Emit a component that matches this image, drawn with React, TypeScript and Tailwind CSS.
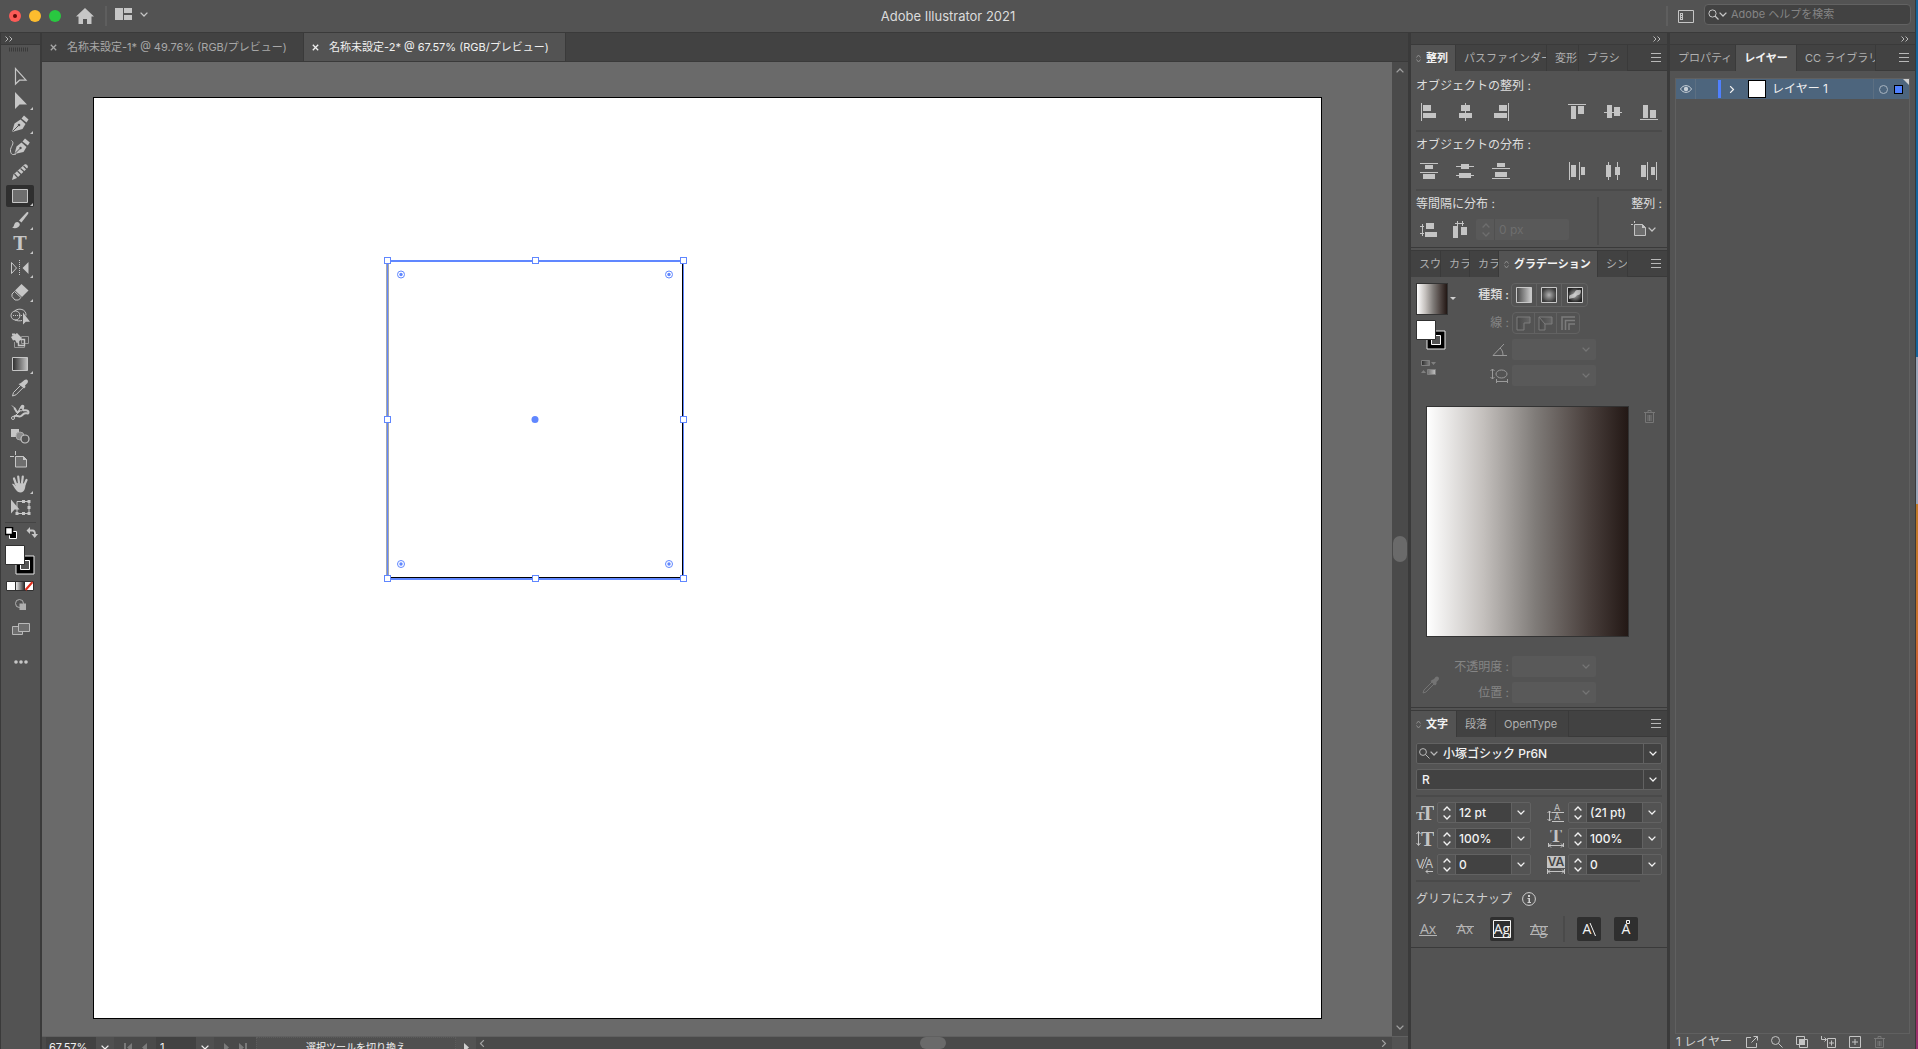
import React from "react";

type Children = { children?: React.ReactNode };

const Svg = ({
  w,
  h,
  className = "",
  children,
}: Children & { w: number; h: number; className?: string }) => (
  <svg
    width={w}
    height={h}
    viewBox={`0 0 ${w} ${h}`}
    className={`shrink-0 ${className}`}
    fill="currentColor"
    aria-hidden="true"
  >
    {children}
  </svg>
);

const Chevron = ({ className = "" }: { className?: string }) => (
  <Svg w={8} h={5} className={className}>
    <path d="M.6.6 4 4 7.4.6" fill="none" stroke="currentColor" strokeWidth="1.3" />
  </Svg>
);

const DoubleChevron = () => (
  <Svg w={8} h={6}>
    <path d="M.5.5 3 3 .5 5.5M4.5.5 7 3 4.5 5.5" fill="none" stroke="currentColor" />
  </Svg>
);

const Diamond = () => (
  <Svg w={5} h={9} className="text-[#8c8c8c]">
    <path d="M.5 3.500 2.500 1l2 2.500M.5 5.500l2 2.500 2-2.500" fill="none" stroke="currentColor" />
  </Svg>
);

/* ---------- Tool bar ---------- */

const tools: { name: string; more?: boolean; active?: boolean; art: React.ReactNode }[] = [
  {
    name: "選択ツール",
    art: <path d="M9.500 4.500v15.500l4-3.800h6.500z" fill="none" stroke="currentColor" strokeWidth="1.2" />,
  },
  { name: "ダイレクト選択ツール", more: true, art: <path d="M9 4v17l4.500-4.500H21z" /> },
  {
    name: "ペンツール",
    more: true,
    art: (
      <>
        <path d="m15.500 6.500 2.500-3 4.500 4-2 3z" />
        <path d="M6 20 8.500 11.500 14.500 7.500l5 4.500-3 5z" />
        <path d="m6.500 19.500 6-6" stroke="#535353" />
        <circle cx="13" cy="13" r="1.300" fill="#535353" />
      </>
    ),
  },
  {
    name: "曲線ツール",
    art: (
      <>
        <path d="m16.500 5.500 2.500-3 4.800 4-2 3z" />
        <path d="M8.500 18 10.500 10.500 15.500 6.500l5 4.500-3 5z" />
        <path d="m9 17.500 5-5" stroke="#535353" />
        <circle cx="14.500" cy="12" r="1.200" fill="#535353" />
        <path d="M5.500 4.500c4 3-1.500 6-1 10.500.5 4 2.500 4 5.500 3" fill="none" stroke="currentColor" />
      </>
    ),
  },
  {
    name: "ブラシツール",
    art: (
      <>
        <path d="m6 20 1.500-5.500L18.500 4.500c1.500-1 4.500 1.500 3 3.500L11 18z" />
        <path
          d="m8.500 14 3.500 4M11.500 11l4 4M14.500 8.500l4 3.500M17.500 6l3.500 3.500"
          stroke="#535353"
          strokeWidth="1.200"
        />
      </>
    ),
  },
  {
    name: "長方形ツール",
    more: true,
    active: true,
    art: <path d="M6.500 5.500h15v13h-15z" fill="#6e6e6e" stroke="currentColor" />,
  },
  {
    name: "筆ツール",
    more: true,
    art: (
      <>
        <path d="M13 12.500 20.500 4.500c1.500-1 2.500 0 1.500 1.500L15.500 14.500z" />
        <path d="M6 19.500c2.500-.5 1.500-3 3.500-5 2-1.500 4.800.500 4.300 2.500-.8 3-5 4-7.800 2.500z" />
      </>
    ),
  },
  {
    name: "文字ツール",
    more: true,
    art: (
      <text x="14" y="18" textAnchor="middle" fontSize="18" fontWeight="700" fontFamily="'DejaVu Serif', serif">
        T
      </text>
    ),
  },
  {
    name: "リフレクトツール",
    more: true,
    art: (
      <>
        <path d="M5.500 6.500v11L10.500 12z" fill="none" stroke="currentColor" />
        <path d="M22.500 6v12L16.500 12z" />
        <path d="M13.500 4v16" stroke="currentColor" strokeDasharray="1 1" />
      </>
    ),
  },
  {
    name: "消しゴムツール",
    more: true,
    art: (
      <>
        <path d="m15.500 4 7 6.500-6.500 6.500-7-6.500z" />
        <path d="m8.500 11.500 6.500 6-2.500 2.500H9l-3-3.500v-2.500z" fill="none" stroke="currentColor" />
      </>
    ),
  },
  {
    name: "シェイプ形成ツール",
    art: (
      <>
        <circle cx="9.500" cy="11.500" r="4.500" fill="none" stroke="currentColor" />
        <path d="M8.500 7c4-3.500 12-2 11.500 4.500M9 16c2 1 5 1 7 .5" fill="none" stroke="currentColor" />
        <path d="M7 11.500h10" stroke="currentColor" strokeDasharray="1 1" />
        <path d="M17 8.500v12l2.800-2.800H24z" />
      </>
    ),
  },
  {
    name: "ライブペイントツール",
    art: (
      <>
        <path d="m5 9 6-4 5 5-5 5.500-2-3.500-2 .5z" />
        <path d="M6 5.500h3v2H6z" />
        <path d="M15.500 8.500h7v7h-7zM8.500 14v5.500h10v-7" fill="none" stroke="#999" />
        <path d="M12.500 11.500h6v6h-6z" fill="none" stroke="currentColor" strokeWidth="1.400" />
      </>
    ),
  },
  {
    name: "グラデーションツール",
    more: true,
    art: <path d="M6.500 5.500h15v13h-15z" fill="url(#toolGrad)" stroke="currentColor" />,
  },
  {
    name: "スポイトツール",
    art: (
      <>
        <path d="m14 7.500 1.500-1 3-2.500c2-1.500 4.500.5 3 3L19 9.500l.5 1.500-1.500 1.500L12.500 8z" />
        <path d="m14.500 9.500-7 7-1 3.500 3.500-1.200 7-7" fill="none" stroke="currentColor" />
      </>
    ),
  },
  {
    name: "パペットワープツール",
    art: (
      <>
        <path
          d="M8 8c2 1 2 5 4 4s2-4 4-6c3-1 0 3 1 4s5-1 5.500 2-3 0-5 2-3 3-6 2-4 1-4 2"
          fill="none"
          stroke="currentColor"
          strokeWidth="2"
        />
        <path d="M6 5.500 8.500 8M7 18l8-8" stroke="currentColor" />
        <circle cx="7" cy="18" r="1.500" fill="#535353" stroke="currentColor" />
        <circle cx="15" cy="9.500" r="1.500" fill="#535353" stroke="currentColor" />
      </>
    ),
  },
  {
    name: "ブレンドツール",
    art: (
      <>
        <path d="M5 5h8v8H5z" />
        <circle cx="14" cy="12" r="4" fill="#8a8a8a" stroke="#aaa" />
        <circle cx="19" cy="15" r="4" fill="#535353" stroke="currentColor" strokeWidth="1.200" />
      </>
    ),
  },
  {
    name: "アートボードツール",
    art: (
      <>
        <path d="M9.500 8.500h8l3 3v7.500h-11z" fill="#6e6e6e" stroke="currentColor" />
        <path d="M4 8.500h4M9.500 3v4" stroke="currentColor" />
        <path d="M17 8v4h4z" />
      </>
    ),
  },
  {
    name: "手のひらツール",
    more: true,
    art: (
      <>
        <path
          d="m10 12-2-5.500M13 11l-.8-6.500M16 11l.8-6.500M18.500 12.500l2-4.500"
          stroke="currentColor"
          strokeWidth="2.200"
          strokeLinecap="round"
        />
        <path d="M6 12c1.500-.800 3 1 4 2l-1-3 10.500.5c0 3-.5 9-5 9-4 0-6-5-8.500-8.500z" />
      </>
    ),
  },
  {
    name: "変形ツール",
    art: (
      <>
        <path d="M5 3.500v14l3.500-4h5z" />
        <path d="M11 5.500h12v12H11z" fill="none" stroke="currentColor" />
        <path d="M16 4h3v3h-3zM16 16h3v3h-3zM21.500 4h3v3h-3zM21.500 10h3v3h-3zM21.500 16h3v3h-3zM9.500 16h3v3h-3z" />
      </>
    ),
  },
];

const FillStroke = ({ className = "" }: { className?: string }) => (
  <Svg w={30} h={30} className={className}>
    <path d="M11 11h18v18H11z" fill="#000" stroke="#e6e6e6" />
    <path d="M15.500 15.500h9v9h-9z" fill="#535353" stroke="#fff" />
    <path d="M.5.500h19v19H.5z" fill="#fff" stroke="#303030" />
  </Svg>
);

const ToolBar = () => (
  <aside className="flex w-[42px] shrink-0 flex-col border-x border-r-2 border-[#3a3a3a] bg-[#535353]">
    <div className="flex h-3 shrink-0 items-center border-b border-[#3a3a3a] bg-[#444] pl-1 text-[#b8b8b8]">
      <DoubleChevron />
    </div>
    <Svg w={20} h={5} className="mt-0.5 ml-2">
      <path d="M0 2.500h20" stroke="#3a3a3a" strokeWidth="4" strokeDasharray="1 1" />
    </Svg>
    <div className="mt-3 flex flex-col pl-[5px] text-[#c6c6c6]">
      {tools.map((t) => (
        <button key={t.name} type="button" aria-label={t.name} className="relative flex h-6 w-7 items-center">
          {t.active && <span className="absolute inset-x-0 inset-y-px rounded-xs bg-[#2f2f2f]" />}
          <Svg w={28} h={24} className="relative">
            {t.art}
            {t.more && <path d="M27 19v3h-3z" />}
          </Svg>
        </button>
      ))}
    </div>
    <div className="mx-1 mt-0.5 h-px bg-[#444]" />
    <div className="mt-1 flex items-center justify-between pr-0.5 pl-1 text-[#c6c6c6]">
      <button type="button" aria-label="初期設定の塗りと線">
        <Svg w={12} h={12}>
          <path d="M4.500 4.500h7v7h-7z" fill="#000" stroke="#fff" />
          <path d="M.5.500h7v7h-7z" fill="#fff" stroke="#000" strokeWidth="1.500" />
        </Svg>
      </button>
      <button type="button" aria-label="塗りと線を入れ替え">
        <Svg w={12} h={12}>
          <path d="M3 3.500h3.500c2 0 2.500 1 2.500 4" fill="none" stroke="currentColor" strokeWidth="1.800" />
          <path d="M4 0v7L.5 3.500zM5.500 7H12l-3.300 4z" />
        </Svg>
      </button>
    </div>
    <button type="button" aria-label="塗りと線" className="mt-1.5 ml-1">
      <FillStroke />
    </button>
    <Svg w={28} h={10} className="mt-[6px] ml-[5px]">
      <path d="M.5.500h27v9H.5z" fill="#fff" stroke="#303030" />
      <path d="M9 1h10v8H9z" fill="url(#modeGrad)" />
      <path d="M9.500 1v8M18.500 1v8" stroke="#303030" />
      <path d="m19.500 9 7-8" stroke="#e0301e" strokeWidth="2" />
    </Svg>
    <button type="button" aria-label="描画方法" className="mt-2 self-center text-[#b0b0b0]">
      <Svg w={11} h={11}>
        <circle cx="4.500" cy="4.500" r="4" fill="none" stroke="currentColor" />
        <path d="M4.500 4.500H11V11H4.500z" />
      </Svg>
    </button>
    <button type="button" aria-label="スクリーンモード" className="mt-3 self-center text-[#b8b8b8]">
      <Svg w={18} h={14}>
        <path d="M.5 4.500h10v8H.5z" fill="#6e6e6e" stroke="currentColor" />
        <path d="M6.500 1.500h11v8h-11z" fill="#6e6e6e" stroke="currentColor" />
      </Svg>
    </button>
    <button type="button" aria-label="ツールバーを編集" className="mt-6 self-center text-[#c6c6c6]">
      <Svg w={14} h={4}>
        <circle cx="2" cy="2" r="1.800" />
        <circle cx="7" cy="2" r="1.800" />
        <circle cx="12" cy="2" r="1.800" />
      </Svg>
    </button>
  </aside>
);

/* ---------- Document ---------- */

const handles = [
  [4, 4], [152, 4], [300, 4],
  [4, 163], [300, 163],
  [4, 322], [152, 322], [300, 322],
];

const corners = [
  [18, 18.5], [286, 18.5], [18, 308], [286, 308],
];

const SelectedShape = () => (
  <svg width="304" height="327" viewBox="0 0 304 327" className="absolute top-[158px] left-[289px]" aria-hidden="true">
    <path d="M4.500 4v318" stroke="#a8a8a8" strokeWidth="3" />
    <path d="M299.500 4v318M4 321.500h296" stroke="#000" />
    <path d="M4.500 4v318M300.500 4v318" stroke="#6087ff" />
    <path d="M4 5h297M4 323h297" stroke="#6087ff" strokeWidth="2" />
    {handles.map(([x, y]) => (
      <rect key={`${x}-${y}`} x={x - 2.5} y={y - 2.5} width="6" height="6" fill="#fff" stroke="#6087ff" />
    ))}
    {corners.map(([x, y]) => (
      <g key={`${x}-${y}`}>
        <circle cx={x} cy={y} r="3.500" fill="#fff" stroke="#6087ff" />
        <circle cx={x} cy={y} r="1.700" fill="#6087ff" />
      </g>
    ))}
    <circle cx="152" cy="163.500" r="3.500" fill="#6087ff" />
  </svg>
);

const DocTab = ({ label, active }: { label: string; active?: boolean }) => (
  <div
    className={`flex w-[262px] items-center gap-2.5 border-r border-[#3a3a3a] pl-2 ${
      active ? "bg-[#535353] text-[#f0f0f0]" : "text-[#a8a8a8]"
    }`}
  >
    <button type="button" aria-label="閉じる">
      <Svg w={7} h={7}>
        <path d="m.8.800 5.400 5.400M6.200.8.800 6.200" stroke="currentColor" strokeWidth="1.300" />
      </Svg>
    </button>
    <button type="button" className="text-[11px] leading-4 whitespace-nowrap">
      {label}
    </button>
  </div>
);

const StatusBar = () => (
  <footer className="h-[13px] shrink-0 overflow-hidden border-t border-[#606060] bg-[#4a4a4a]">
    <div className="flex h-5 items-center text-[11px] leading-4 text-[#f0f0f0]">
      <div className="ml-1 flex h-5 w-[68px] items-center bg-[#424242]">
        <input aria-label="ズーム" defaultValue="67.57%" className="w-[50px] pl-[3px]" />
        <button type="button" aria-label="ズーム値" className="flex h-5 w-[18px] items-center justify-center bg-[#505050]">
          <Chevron />
        </button>
      </div>
      <div className="flex w-[42px] items-center justify-center gap-2.5 text-[#7a7a7a]">
        <Svg w={8} h={9}>
          <path d="M0 0h2v9H0zM8 0v9L3 4.500z" />
        </Svg>
        <Svg w={5} h={9}>
          <path d="M5 0v9L0 4.500z" />
        </Svg>
      </div>
      <div className="flex h-5 w-[58px] items-center bg-[#424242]">
        <input aria-label="アートボード" defaultValue="1" className="w-10 pl-1" />
        <button type="button" aria-label="アートボード一覧" className="flex h-5 w-[18px] items-center justify-center bg-[#505050]">
          <Chevron />
        </button>
      </div>
      <div className="flex w-[42px] items-center justify-center gap-2.5 text-[#7a7a7a]">
        <Svg w={5} h={9}>
          <path d="M0 0v9L5 4.500z" />
        </Svg>
        <Svg w={8} h={9}>
          <path d="M6 0h2v9H6zM0 0v9L5 4.500z" />
        </Svg>
      </div>
      <div className="flex h-5 w-[200px] items-center justify-center border border-dotted border-[#5c5c5c] bg-[#505050] text-[10px]">
        選択ツールを切り換え
      </div>
      <div className="flex h-5 w-5 items-center justify-center bg-[#535353] text-[#d0d0d0]">
        <Svg w={5} h={9}>
          <path d="M0 0v9L5 4.500z" />
        </Svg>
      </div>
      <div className="flex h-5 flex-1 items-start justify-between bg-[#4a4a4a] pr-1 pl-0.5 text-[#a0a0a0]">
        <Chevron className="mt-1 rotate-90" />
        <span className="h-3 w-[26px] rounded-full bg-[#6a6a6a]" />
        <Chevron className="mt-1 -rotate-90" />
      </div>
      <div className="h-5 w-4 bg-[#535353]" />
    </div>
  </footer>
);

const Document = () => (
  <main className="flex min-w-0 flex-1 flex-col">
    <div className="flex h-[29px] shrink-0 border-b border-[#3a3a3a] bg-[#424242]">
      <DocTab label="名称未設定-1* @ 49.76% (RGB/プレビュー)" />
      <DocTab label="名称未設定-2* @ 67.57% (RGB/プレビュー)" active />
    </div>
    <div className="flex min-h-0 flex-1">
      <div className="flex min-w-0 flex-1 bg-[#6a6a6a] pt-[35px] pr-[70px] pb-[17px] pl-[51px]">
        <div className="relative flex-1 border border-black bg-white">
          <SelectedShape />
        </div>
      </div>
      <div className="flex w-4 shrink-0 flex-col items-center justify-between bg-[#4a4a4a] py-1.5 text-[#a0a0a0]">
        <Chevron className="rotate-180" />
        <span className="h-[26px] w-3.5 rounded-full bg-[#6a6a6a]" />
        <Chevron />
      </div>
    </div>
    <StatusBar />
  </main>
);

/* ---------- Panels ---------- */

const Tab = ({ active, className = "", children }: Children & { active?: boolean; className?: string }) => (
  <button
    type="button"
    role="tab"
    aria-selected={!!active}
    className={`flex h-full shrink-0 items-center overflow-hidden border-r border-[#3a3a3a] text-[11px] leading-4 whitespace-nowrap ${
      active ? "gap-[5px] bg-[#535353] pl-[5px] font-bold text-[#f2f2f2]" : "pl-2 text-[#b0b0b0]"
    } ${className}`}
  >
    {active && <Diamond />}
    {children}
  </button>
);

const TabRow = ({ children }: Children) => (
  <div role="tablist" className="flex h-[26px] shrink-0 bg-[#424242]">
    {children}
    <button
      type="button"
      aria-label="パネルメニュー"
      className="flex flex-1 items-center justify-end border-b border-[#3a3a3a] pr-1.5 text-[#b8b8b8]"
    >
      <Svg w={10} h={9}>
        <path d="M0 .5h10M0 4.500h10M0 8.500h10" stroke="currentColor" />
      </Svg>
    </button>
  </div>
);

const alignObjects = [
  <path d="M1 0h1v18H1zM3 2h8v6H3zM3 10h13v5H3z" />,
  <path d="M9 0h1v18H9zM5 2h9v6H5zM3 10h13v5H3z" />,
  <path d="M16 0h1v18h-1zM7 2h8v6H7zM2 10h13v5H2z" />,
  <path d="M0 1h18v1H0zM3 3h5v13H3zM10 3h6v8h-6z" />,
  <path d="M0 9h18v1H0zM3 2h5v13H3zM10 4h6v9h-6z" />,
  <path d="M0 16h18v1H0zM3 2h5v13H3zM10 7h6v8h-6z" />,
];

const distributeObjects = [
  <path d="M0 1h18v1H0zM5 3h8v4H5zM0 10h18v1H0zM3 12h12v5H3z" />,
  <path d="M0 4h18v1H0zM5 2h8v5H5zM0 13h18v1H0zM3 11h12v5H3z" />,
  <path d="M0 6h18v1H0zM5 1h8v4H5zM0 16h18v1H0zM3 10h12v5H3z" />,
  <path d="M1 0h1v18H1zM3 3h5v12H3zM11 0h1v18h-1zM13 5h4v8h-4z" />,
  <path d="M4 0h1v18H4zM2 3h5v12H2zM13 0h1v18h-1zM11 5h5v8h-5z" />,
  <path d="M7 0h1v18H7zM1 3h5v12H1zM16 0h1v18h-1zM11 5h4v8h-4z" />,
];

const IconRow = ({ icons, label }: { icons: React.ReactNode[]; label: string }) => (
  <div className="mt-2 flex justify-between px-1 text-[#c4c4c4]">
    {[icons.slice(0, 3), icons.slice(3)].map((group, g) => (
      <div key={g} className="flex gap-[18px]">
        {group.map((icon, i) => (
          <button key={i} type="button" aria-label={`${label} ${g * 3 + i + 1}`}>
            <Svg w={18} h={18}>{icon}</Svg>
          </button>
        ))}
      </div>
    ))}
  </div>
);

const Spinner = () => (
  <Svg w={8} h={14}>
    <path d="M.6 4.500 4 1l3.400 3.500M.6 9.500 4 13l3.400-3.500" fill="none" stroke="currentColor" strokeWidth="1.300" />
  </Svg>
);

const AlignPanel = () => (
  <section className="flex flex-col border-b border-[#3a3a3a]">
    <TabRow>
      <Tab active className="w-[45px]">整列</Tab>
      <Tab className="w-[91px]">パスファインダー</Tab>
      <Tab className="w-8">変形</Tab>
      <Tab className="w-[49px]">ブラシ</Tab>
    </TabRow>
    <div className="px-[5px] pt-1.5 pb-0.5 text-[12px] leading-[18px] text-[#dedede]">
      <h3>オブジェクトの整列 :</h3>
      <IconRow icons={alignObjects} label="整列" />
      <div className="mt-[9px] h-0.5 bg-[#4a4a4a]" />
      <h3 className="mt-1">オブジェクトの分布 :</h3>
      <IconRow icons={distributeObjects} label="分布" />
      <div className="mt-[9px] h-0.5 bg-[#4a4a4a]" />
      <div className="mt-1 flex">
        <div className="flex-1">
          <h3>等間隔に分布 :</h3>
          <div className="mt-1.5 flex items-center gap-3.5 pl-1 text-[#c4c4c4]">
            <button type="button" aria-label="垂直方向等間隔に分布">
              <Svg w={18} h={18}>
                <path d="M6 2h8v6H6zM5 11h12v5H5zM0 5h4v1H0zM0 12h4v1H0zM2 3h1v12H2z" />
              </Svg>
            </button>
            <button type="button" aria-label="水平方向等間隔に分布">
              <Svg w={18} h={18}>
                <path d="M1 5h5v12H1zM9 6h6v8H9zM3 2h9v1H3zM5 0h1v5H5zM10 0h1v5h-1z" />
              </Svg>
            </button>
            <div className="-ml-2 flex h-[21px] w-[93px] items-center rounded-xs bg-[#595959] pl-1.5 text-[#6e6e6e]">
              <Spinner />
              <input
                aria-label="間隔値"
                defaultValue="0 px"
                disabled
                className="ml-1 h-full w-16 border-l border-[#505050] pl-1 text-[12px]"
              />
            </div>
          </div>
        </div>
        <div className="mt-0.5 h-12 w-0.5 bg-[#4a4a4a]" />
        <div className="w-[63px]">
          <h3 className="text-right">整列 :</h3>
          <button type="button" aria-label="整列の基準" className="mt-1.5 flex items-center pt-0.5 pl-8 text-[#c4c4c4]">
            <Svg w={16} h={16}>
              <path d="M3.500 3.500h8l3 3v8h-11z" fill="#6e6e6e" stroke="currentColor" />
              <path d="M0 3h2v1H0zM3 0h1v2H3zM11 3v4h4z" />
            </Svg>
            <Chevron className="ml-px" />
          </button>
        </div>
      </div>
    </div>
  </section>
);

const DisabledSelect = ({ label }: { label: string }) => (
  <div className="relative h-[21px] w-[84px] rounded-xs bg-[#595959] text-[#757575]">
    <select aria-label={label} disabled className="size-full appearance-none">
      <option></option>
    </select>
    <Chevron className="absolute top-2 right-1.5" />
  </div>
);

const GradientPanel = () => (
  <section className="mt-0.5 flex flex-col border-y border-[#3a3a3a]">
    <TabRow>
      <Tab className="w-[30px]">スウ</Tab>
      <Tab className="w-[29px]">カラ</Tab>
      <Tab className="w-[29px]">カラ</Tab>
      <Tab active className="w-[99px]">グラデーション</Tab>
      <Tab className="w-[30px]">シン</Tab>
    </TabRow>
    <div className="flex px-[5px] pt-1.5">
      <div className="w-10">
        <div className="flex items-center gap-0.5">
          <div className="size-8 shrink-0 border border-[#333] bg-[linear-gradient(to_right,#fff,#c4c0bd_28%,#7f7b78_54%,#4a403d_80%,#231815)]" />
          <Svg w={6} h={4} className="text-[#d0d0d0]">
            <path d="M0 0h6L3 3z" />
          </Svg>
        </div>
        <FillStroke className="mt-[5px]" />
        <Svg w={16} h={15} className="mt-2.5 ml-[5px] text-[#808080]">
          <path d="M.5.500h8v5h-8zM6.500 9.500h8v5h-8z" fill="url(#toolGrad)" stroke="currentColor" />
          <path d="M10 2h5l-2.500 3zM0 13h5L2.500 10z" />
        </Svg>
      </div>
      <div className="flex flex-1 flex-col gap-[5px] text-[12px] leading-[18px] text-[#858585]">
        <div className="flex h-6 items-center">
          <span className="w-[53px] text-right font-medium text-[#dedede]">種類 :</span>
          <div className="ml-0.5 flex h-6 divide-x divide-[#626262] rounded-sm border border-[#626262]">
            {[
              { name: "線形グラデーション", fill: "url(#lin)" },
              { name: "円形グラデーション", fill: "url(#rad)" },
              { name: "フリーグラデーション", fill: "url(#free)" },
            ].map(({ name, fill }) => (
              <button key={name} type="button" aria-label={name} className="flex w-[25px] items-center justify-center">
                <Svg w={16} h={16}>
                  <path d="M.5.500h15v15H.5z" fill={fill} stroke="#c8c8c8" />
                  {fill === "url(#free)" && (
                    <path
                      d="M2 11c0-4 2-3 4-4s2-4 4-4 4-1 4 1-1 4-3 4-2 3-5 3-4 2-4 0z"
                      fill="#e0e0e0"
                      opacity=".7"
                    />
                  )}
                </Svg>
              </button>
            ))}
          </div>
        </div>
        <div className="flex h-[22px] items-center">
          <span className="w-[53px] text-right">線 :</span>
          <div className="ml-[3px] flex h-[22px] divide-x divide-[#626262] rounded-sm border border-[#626262]">
            {[
              <path d="M1 14V1h13v6H8v7z" fill="url(#dim)" stroke="#7c7c7c" />,
              <path d="M1 1v13h6V8h7V1zM1 1l6 7" fill="url(#dim)" stroke="#7c7c7c" />,
              <path d="M1 14V1h13M4.500 14V4.500H14M8 14V8h6" fill="none" stroke="#7c7c7c" strokeWidth="1.500" />,
            ].map((art, i) => (
              <button key={i} type="button" disabled aria-label={`線 ${i + 1}`} className="flex w-[22px] items-center justify-center">
                <Svg w={15} h={15}>{art}</Svg>
              </button>
            ))}
          </div>
        </div>
        <div className="flex items-center justify-start">
          <span className="flex w-[53px] justify-end pr-0.5 text-[#9a9a9a]">
            <Svg w={15} h={13}>
              <path d="M12 1 1 12.500h14M8 5c2 1.500 3 4 3 7.500" fill="none" stroke="currentColor" />
            </Svg>
          </span>
          <span className="ml-[3px]">
            <DisabledSelect label="角度" />
          </span>
        </div>
        <div className="flex items-center justify-start">
          <span className="flex w-[53px] justify-end pr-px text-[#9a9a9a]">
            <Svg w={18} h={15}>
              <path
                d="M2.500 1v10M.5 3l2-2 2 2M.5 9l2 2 2-2M6.500 11v4M17.500 11v4M6.500 13.500h11"
                fill="none"
                stroke="currentColor"
              />
              <ellipse cx="11.500" cy="6" rx="5.500" ry="4" fill="none" stroke="currentColor" />
            </Svg>
          </span>
          <span className="ml-[3px]">
            <DisabledSelect label="縦横比" />
          </span>
        </div>
      </div>
    </div>
    <div className="mt-5 flex pr-3 pl-[15px]">
      <div className="h-[231px] flex-1 border border-[#333] bg-[linear-gradient(to_right,#fff,#c4c0bd_28%,#7f7b78_54%,#4a403d_80%,#231815)]" />
      <button type="button" disabled aria-label="分岐点を削除" className="ml-[15px] self-start pt-1 text-[#777]">
        <Svg w={11} h={13}>
          <path d="M0 2.500h11M4 2V.5h3V2M1.500 3v9.500h8V3M4 5v6M5.500 5v6M7 5v6" fill="none" stroke="currentColor" />
        </Svg>
      </button>
    </div>
    <div className="mt-[19px] flex px-[5px] pb-1 text-[12px] leading-[18px] text-[#858585]">
      <button type="button" disabled aria-label="スポイト" className="w-9 pt-2.5 pl-1.5 text-[#747474]">
        <Svg w={18} h={18}>
          <path d="m10 4 2-1 1.500-2c2-1.500 4.500.5 3 3L14.500 6v2L13 9.500 8.500 5z" />
          <path d="m10 6-8 8-1 3 3-1 8-8" fill="none" stroke="currentColor" />
        </Svg>
      </button>
      <div className="flex flex-1 flex-col gap-[5px]">
        {["不透明度", "位置"].map((name) => (
          <div key={name} className="flex items-center">
            <span className="w-[57px] text-right whitespace-nowrap">{name} :</span>
            <span className="ml-[3px]">
              <DisabledSelect label={name} />
            </span>
          </div>
        ))}
      </div>
    </div>
  </section>
);

const FontSelect = ({ label, value, search }: { label: string; value: string; search?: boolean }) => (
  <div className="relative flex h-[21px] items-center rounded-xs border border-[#626262] bg-[#424242] text-[#f2f2f2]">
    {search && (
      <span className="flex items-center pl-0.5 text-[#b8b8b8]">
        <Svg w={11} h={11}>
          <circle cx="4" cy="4" r="3.400" fill="none" stroke="currentColor" />
          <path d="m6.500 6.500 4 4" stroke="currentColor" />
        </Svg>
        <Chevron />
      </span>
    )}
    <select aria-label={label} className="h-full flex-1 appearance-none pl-[5px] text-[12px] font-medium">
      <option>{value}</option>
    </select>
    <span className="pointer-events-none absolute inset-y-0 right-0 flex w-[18px] items-center justify-center border-l border-[#626262]">
      <Chevron />
    </span>
  </div>
);

const ValueField = ({ label, value, icon }: { label: string; value: string; icon: React.ReactNode }) => (
  <div className="flex items-center gap-[3px]">
    <span className="text-[#c4c4c4]">
      <Svg w={18} h={18}>{icon}</Svg>
    </span>
    <div className="flex h-[21px] w-[94px] divide-x divide-[#626262] rounded-xs border border-[#626262] text-[#f2f2f2]">
      <span className="flex w-[18px] items-center justify-center">
        <Spinner />
      </span>
      <input
        aria-label={label}
        defaultValue={value}
        className="min-w-0 flex-1 bg-[#424242] pl-[3px] text-[12px] font-medium"
      />
      <button type="button" aria-label={`${label}の一覧`} className="flex w-[18px] items-center justify-center">
        <Chevron />
      </button>
    </div>
  </div>
);

const serif = "'Liberation Serif', serif";
const sans = "Inter, sans-serif";

const SnapButton = ({
  label,
  name,
  on,
  boxed,
  x = 9,
  line,
}: {
  label: string;
  name: string;
  on?: boolean;
  boxed?: boolean;
  x?: number;
  line?: React.ReactNode;
}) => (
  <button
    type="button"
    aria-label={name}
    className={`flex size-6 items-center justify-center rounded-xs ${on ? "bg-[#2f2f2f] text-[#f4f4f4]" : "text-[#b4b4b4]"}`}
  >
    <Svg w={18} h={18}>
      <text x={x} y="14" textAnchor="middle" fontSize="14" fontFamily="'Open Sans', sans-serif">
        {label}
      </text>
      {boxed && <path d="M.5.500h17v17H.5z" fill="none" stroke="currentColor" />}
      {line}
    </Svg>
  </button>
);

const CharacterPanel = () => (
  <section className="mt-0.5 flex flex-col border-y border-[#3a3a3a]">
    <TabRow>
      <Tab active className="w-[46px]">文字</Tab>
      <Tab className="w-[39px]">段落</Tab>
      <Tab className="w-[73px]">OpenType</Tab>
    </TabRow>
    <div className="px-[5px] pt-1.5 pb-[5px]">
      <div className="flex flex-col gap-[5px]">
        <FontSelect label="フォントファミリ" value="小塚ゴシック Pr6N" search />
        <FontSelect label="フォントスタイル" value="R" />
      </div>
      <div className="mt-[5px] h-0.5 bg-[#4a4a4a]" />
      <div className="mt-[5px] flex justify-between">
        <div className="flex flex-col gap-[5px]">
          <ValueField
            label="フォントサイズ"
            value="12 pt"
            icon={
              <g fontFamily={serif} fontWeight="700">
                <text x="0" y="16" fontSize="13">T</text>
                <text x="5" y="16" fontSize="20">T</text>
              </g>
            }
          />
          <ValueField
            label="垂直比率"
            value="100%"
            icon={
              <>
                <path d="M2.500 2v13M.5 4l2-2.500 2 2.500M.5 13l2 2.500 2-2.500" fill="none" stroke="currentColor" />
                <text x="5" y="16" fontSize="20" fontWeight="700" fontFamily={serif}>T</text>
              </>
            }
          />
          <ValueField
            label="カーニング"
            value="0"
            icon={
              <>
                <text x="0" y="12" fontSize="12" fontFamily={sans}>V</text>
                <text x="9" y="12" fontSize="12" fontFamily={sans}>A</text>
                <path d="m6 13 5-12M17 15.500h-7M12 13.500l-2 2 2 2" fill="none" stroke="currentColor" />
              </>
            }
          />
        </div>
        <div className="flex flex-col gap-[5px]">
          <ValueField
            label="行送り"
            value="(21 pt)"
            icon={
              <>
                <path
                  d="M2.500 7v10M.5 9l2-2 2 2M.5 15l2 2 2-2M5 8.500h12M5 17.500h12"
                  fill="none"
                  stroke="currentColor"
                />
                <text x="7" y="7" fontSize="9" fontFamily={sans}>A</text>
                <text x="7" y="16" fontSize="9" fontFamily={sans}>A</text>
              </>
            }
          />
          <ValueField
            label="水平比率"
            value="100%"
            icon={
              <>
                <text x="9" y="12" textAnchor="middle" fontSize="18" fontWeight="700" fontFamily={serif}>T</text>
                <path
                  d="M1.500 13v4M16.500 13v4M2 15.500h14M4 13.500l-2 2 2 2M14 13.500l2 2-2 2"
                  fill="none"
                  stroke="currentColor"
                />
              </>
            }
          />
          <ValueField
            label="トラッキング"
            value="0"
            icon={
              <>
                <path d="M0 0h18v12H0z" />
                <text x="9" y="10" textAnchor="middle" fontSize="12" fontWeight="600" fontFamily={sans} fill="#424242">VA</text>
                <path
                  d="M.5 13v5M17.500 13v5M1 15.500h16M3 13.500l-2 2 2 2M15 13.500l2 2-2 2"
                  fill="none"
                  stroke="currentColor"
                />
              </>
            }
          />
        </div>
      </div>
      <div className="mt-[5px] mr-[22px] h-0.5 bg-[#4a4a4a]" />
      <div className="mt-2 flex items-center gap-2.5 text-[12px] leading-[18px] text-[#d0d0d0]">
        グリフにスナップ
        <button type="button" aria-label="情報">
          <Svg w={14} h={14}>
            <circle cx="7" cy="7" r="6.400" fill="none" stroke="currentColor" />
            <path d="M6 3h2v2H6zM5.500 6H8v4h1v1H5.500v-1h1V7h-1z" />
          </Svg>
        </button>
      </div>
      <div className="mt-2 flex items-center">
        <div className="flex w-[135px] justify-between">
          <SnapButton name="ベースライン" label="Ax" line={<path d="M0 15.500h18" stroke="currentColor" />} />
          <SnapButton name="xハイト" label="Ax" line={<path d="M0 6.500h18" stroke="currentColor" />} />
          <SnapButton name="グリフ境界" label="Ag" on boxed />
          <SnapButton name="近接グリフガイド" label="Ag" line={<path d="M0 6.500h18M0 14.500h18" stroke="currentColor" />} />
        </div>
        <div className="ml-3 h-[26px] w-0.5 bg-[#4a4a4a]" />
        <div className="ml-3 flex gap-[13px]">
          <SnapButton name="角度ガイド" label="A" on x={7} line={<path d="m10 3 5.500 13" stroke="currentColor" />} />
          <SnapButton
            name="アンカーポイント"
            label="A"
            on
            line={<path d="M9.500.500h3v3h-3z" fill="#2f2f2f" stroke="currentColor" />}
          />
        </div>
      </div>
    </div>
  </section>
);

const DockHeader = () => (
  <div className="flex h-3 shrink-0 items-center justify-end border-b border-[#3a3a3a] bg-[#444] pr-1.5 text-[#b8b8b8]">
    <DoubleChevron />
  </div>
);

const LayersPanel = () => (
  <aside className="flex w-[245px] shrink-0 flex-col bg-[#535353]">
    <DockHeader />
    <TabRow>
      <Tab className="w-[66px]">プロパティ</Tab>
      <button
        type="button"
        role="tab"
        aria-selected
        className="h-full w-[61px] border-r border-[#3a3a3a] bg-[#535353] text-[11px] leading-4 font-bold text-[#f2f2f2]"
      >
        レイヤー
      </button>
      <Tab className="w-[79px]">CC ライブラリ</Tab>
    </TabRow>
    <div className="mt-[7px] mr-[5px] ml-[5px] flex-1 border border-[#606060]">
      <div className="relative flex h-5 items-center bg-[#4d657d] text-[12px] leading-[18px] text-[#f0f0f0]">
        <button
          type="button"
          aria-label="表示"
          className="flex h-full w-5 items-center justify-center border-r border-[#5c6f82] text-[#c8d0d8]"
        >
          <Svg w={12} h={8}>
            <path d="M.5 4C3-.5 9-.5 11.500 4 9 8.500 3 8.500.5 4z" fill="none" stroke="currentColor" />
            <circle cx="6" cy="4" r="2.200" />
          </Svg>
        </button>
        <span className="ml-[22px] h-[18px] w-[3px] bg-[#4f80ff]" />
        <Chevron className="ml-[7px] -rotate-90" />
        <span className="ml-3 size-[18px] border border-black bg-white" />
        <span className="ml-1.5 flex-1">レイヤー 1</span>
        <span className="flex h-full w-9 items-center gap-1.5 border-l border-[#5c6f82] pl-[5px]">
          <span className="size-[9px] rounded-full border border-[#a8b4c0]" />
          <span className="size-[9px] border border-black bg-[#4f80ff]" />
        </span>
        <Svg w={6} h={6} className="absolute top-0 right-0">
          <path d="M0 0h6v6z" fill="#d0d0d0" />
        </Svg>
      </div>
    </div>
    <div className="flex h-[15px] shrink-0 items-center pl-1.5 text-[12px] leading-[14px] text-[#d0d0d0]">
      <span className="w-[70px]">1 レイヤー</span>
      <div className="flex items-center gap-[13px] text-[#c4c4c4]">
        <Svg w={12} h={12}>
          <path d="M5 1.500H.5v10h10V7M5.500 6.500l6-6M7.500.5h4v4" fill="none" stroke="currentColor" />
        </Svg>
        <Svg w={12} h={12}>
          <circle cx="4.500" cy="4.500" r="4" fill="none" stroke="currentColor" />
          <path d="m7.500 7.500 4 4" stroke="currentColor" />
        </Svg>
        <Svg w={12} h={12}>
          <path d="M.5.500h8v8h-8zM3.500 3.500h8v8h-8z" fill="none" stroke="currentColor" />
          <path d="M3 3h6v6H3z" />
        </Svg>
        <Svg w={15} h={12}>
          <path
            d="M.5 0v3.500H5M3.500 1.500l2 2-2 2M6.500 2.500h8v9h-8zM10.500 4.500v5M8 7h5"
            fill="none"
            stroke="currentColor"
          />
        </Svg>
        <Svg w={12} h={12}>
          <path d="M.5.500h11v11H.5zM6 3v6M3 6h6" fill="none" stroke="currentColor" />
        </Svg>
        <Svg w={11} h={12} className="text-[#777]">
          <path d="M0 2.500h11M4 2V.5h3V2M1.500 3v8.500h8V3M4 5v5M5.500 5v5M7 5v5" fill="none" stroke="currentColor" />
        </Svg>
      </div>
    </div>
  </aside>
);

const TitleBar = () => (
  <header className="flex h-[33px] shrink-0 items-center border-b border-[#3a3a3a] bg-[#535353] pr-1 pl-[9px] text-[#c6c6c6]">
    <div className="flex flex-1 items-center">
      <div className="flex gap-2">
        <span className="flex size-3 items-center justify-center rounded-full bg-[#fc5b57]">
          <span className="size-1 rounded-full bg-[#5c0b08]" />
        </span>
        <span className="size-3 rounded-full bg-[#fdbc2e]" />
        <span className="size-3 rounded-full bg-[#29c840]" />
      </div>
      <button type="button" aria-label="ホーム" className="ml-[15px]">
        <Svg w={18} h={16}>
          <path d="m9 0 9 8.500h-2.500V16H11v-5H7v5H2.500V8.500H0z" />
        </Svg>
      </button>
      <span className="ml-[11px] h-5 w-0.5 bg-[#5e5e5e]" />
      <button type="button" aria-label="ドキュメントの整列" className="mb-1 ml-2 flex items-center gap-2">
        <Svg w={17} h={12}>
          <path d="M0 0h8v12H0zM9 0h8v5H9zM9 7h8v5H9z" />
        </Svg>
        <Chevron />
      </button>
    </div>
    <h1 className="pr-6 text-[13px] leading-4 text-[#dcdcdc]">Adobe Illustrator 2021</h1>
    <div className="flex flex-1 items-center justify-end">
      <span className="h-5 w-0.5 bg-[#5e5e5e]" />
      <button type="button" aria-label="ワークスペース" className="ml-2.5">
        <Svg w={16} h={13}>
          <path d="M.5.500h15v12H.5z" fill="none" stroke="currentColor" />
          <path d="M2 3h3v7H2z" />
          <path d="M3 4h1v1H3zM3 6h1v1H3zM3 8h1v1H3z" fill="#535353" />
        </Svg>
      </button>
      <label className="mb-1 ml-2.5 flex h-[21px] w-[207px] items-center rounded-sm border border-[#626262] bg-[#424242] pl-[3px]">
        <Svg w={11} h={11}>
          <circle cx="4.500" cy="4.500" r="3.600" fill="none" stroke="currentColor" />
          <path d="m7 7 3.500 3.500" stroke="currentColor" strokeWidth="1.300" />
        </Svg>
        <Chevron />
        <input
          type="search"
          aria-label="検索"
          placeholder="Adobe ヘルプを検索"
          className="ml-1 min-w-0 flex-1 text-[11px] placeholder:text-[#858585]"
        />
      </label>
    </div>
  </header>
);

const Gradients = () => (
  <svg width="0" height="0" className="absolute" aria-hidden="true">
    <defs>
      <linearGradient id="toolGrad">
        <stop offset="0" stopColor="#2c2c2c" />
        <stop offset="1" stopColor="#c4c4c4" />
      </linearGradient>
      <linearGradient id="lin">
        <stop offset="0" stopColor="#444" />
        <stop offset="1" stopColor="#d0d0d0" />
      </linearGradient>
      <linearGradient id="modeGrad">
        <stop offset="0" stopColor="#fff" />
        <stop offset="1" stopColor="#222" />
      </linearGradient>
      <radialGradient id="rad">
        <stop offset="0" stopColor="#b0b0b0" />
        <stop offset="1" stopColor="#3c3c3c" />
      </radialGradient>
      <radialGradient id="free">
        <stop offset="0" stopColor="#aaa" />
        <stop offset="1" stopColor="#222" />
      </radialGradient>
      <linearGradient id="dim">
        <stop offset="0" stopColor="#484848" />
        <stop offset="1" stopColor="#666" />
      </linearGradient>
    </defs>
  </svg>
);

export default function App() {
  return (
    <div className="flex h-screen overflow-hidden bg-[linear-gradient(#15649c_34%,#98a4b8_34%,#98a4b8_48%,#c07a28_48%,#c8702c_60%,#cc3a3c_70%,#c41c3c_85%,#983070)] font-[Inter,'Noto_Sans_CJK_JP',sans-serif]">
      <Gradients />
      <div className="mr-0.5 flex min-w-0 flex-1 flex-col border-r border-[#3a3a3a]">
        <TitleBar />
        <div className="flex min-h-0 flex-1">
          <ToolBar />
          <Document />
          <aside className="flex w-[262px] shrink-0 flex-col border-x-3 border-[#3a3a3a] bg-[#535353]">
            <DockHeader />
            <AlignPanel />
            <GradientPanel />
            <CharacterPanel />
          </aside>
          <LayersPanel />
        </div>
      </div>
    </div>
  );
}
